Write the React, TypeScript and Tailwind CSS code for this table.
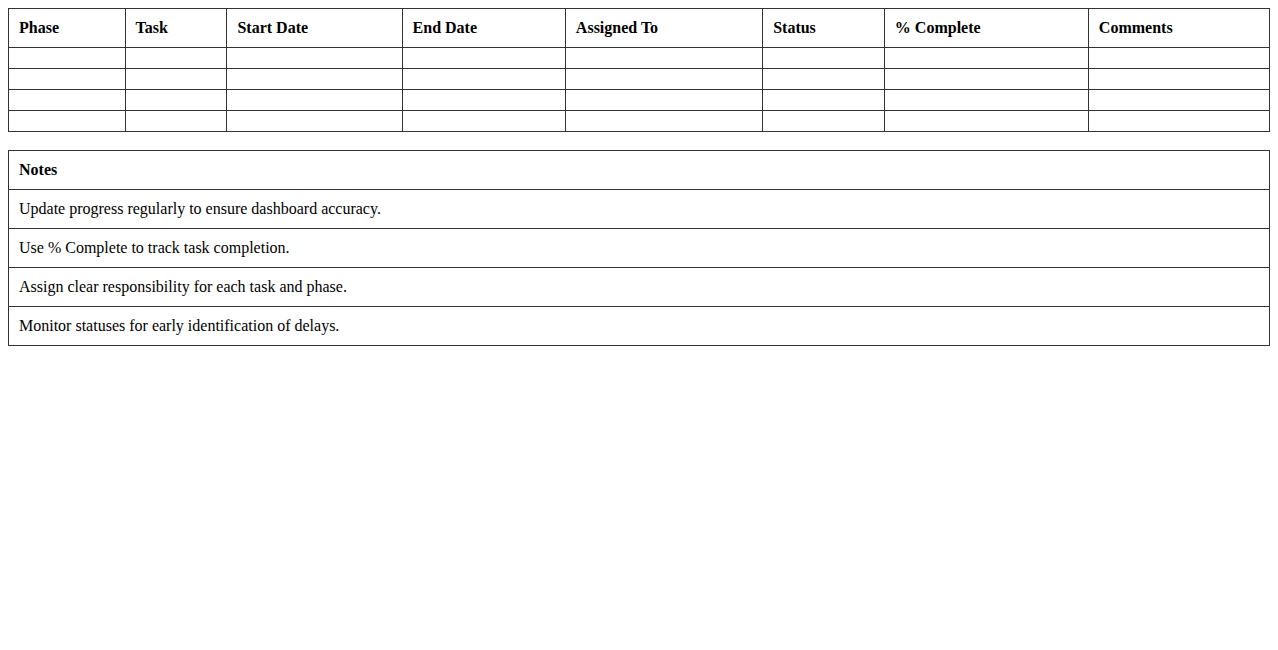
const headers = ['Phase', 'Task', 'Start Date', 'End Date', 'Assigned To', 'Status', '% Complete', 'Comments'];

const notes = [
  'Update progress regularly to ensure dashboard accuracy.',
  'Use % Complete to track task completion.',
  'Assign clear responsibility for each task and phase.',
  'Monitor statuses for early identification of delays.',
];

export default function App() {
  return (
    <div className="m-2 font-['Liberation_Serif','Times_New_Roman',serif] text-base leading-[18px] text-black bg-white">
      <table className="w-full border-collapse mb-[18px]">
        <thead>
          <tr>
            {headers.map((h) => (
              <th key={h} className="border border-[#333] p-[10px] text-left font-bold">
                {h}
              </th>
            ))}
          </tr>
        </thead>
        <tbody>
          {[0, 1, 2, 3].map((r) => (
            <tr key={r}>
              {headers.map((h) => (
                <td key={h} className="border border-[#333] p-[10px]" />
              ))}
            </tr>
          ))}
        </tbody>
      </table>

      <table className="w-full border-collapse">
        <thead>
          <tr>
            <th className="border border-[#333] p-[10px] text-left font-bold">Notes</th>
          </tr>
        </thead>
        <tbody>
          {notes.map((n) => (
            <tr key={n}>
              <td className="border border-[#333] p-[10px]">{n}</td>
            </tr>
          ))}
        </tbody>
      </table>
    </div>
  );
}
